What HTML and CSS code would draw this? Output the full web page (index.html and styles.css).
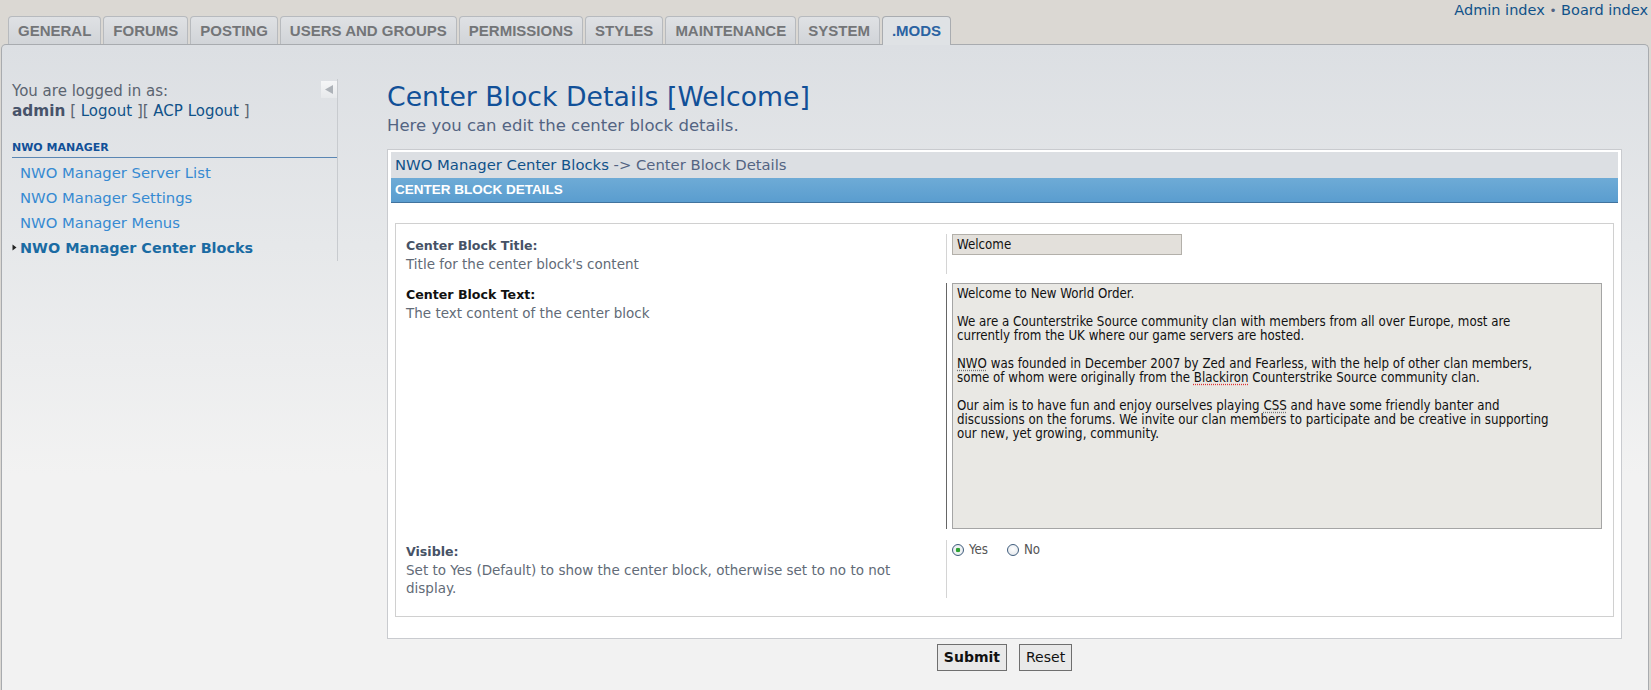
FILE: index.html
```html
<!DOCTYPE html>
<html>
<head>
<meta charset="utf-8">
<title>Center Block Details</title>
<link rel="stylesheet" href="styles.css">
</head>
<body>
<div class="topbar">
  <ul class="tabs">
    <li class="tab">GENERAL</li>
    <li class="tab">FORUMS</li>
    <li class="tab">POSTING</li>
    <li class="tab">USERS AND GROUPS</li>
    <li class="tab">PERMISSIONS</li>
    <li class="tab">STYLES</li>
    <li class="tab">MAINTENANCE</li>
    <li class="tab">SYSTEM</li>
    <li class="tab active">.MODS</li>
  </ul>
  <div class="toplinks"><a href="#">Admin index</a> <span class="dot">•</span> <a href="#">Board index</a></div>
</div>

<div class="panel">
  <aside class="side">
    <div class="login">You are logged in as:<br><b>admin</b> [ <a href="#">Logout</a> ][ <a href="#">ACP Logout</a> ]</div>
    <span class="collapse"><svg width="16" height="17" viewBox="0 0 16 17"><path d="M4 8.5 L12 4 L12 13 Z" fill="#adb2b8"/></svg></span>
    <h3 class="menu-head">NWO MANAGER</h3>
    <ul class="menu">
      <li><a href="#">NWO Manager Server List</a></li>
      <li><a href="#">NWO Manager Settings</a></li>
      <li><a href="#">NWO Manager Menus</a></li>
      <li class="current"><svg class="arrow" width="5" height="7" viewBox="0 0 5 7"><path d="M0.5 0.5 L4.5 3.5 L0.5 6.5 Z" fill="#222"/></svg><a href="#">NWO Manager Center Blocks</a></li>
    </ul>
  </aside>

  <main class="main">
    <h1>Center Block Details [Welcome]</h1>
    <p class="lead">Here you can edit the center block details.</p>

    <form class="form">
      <div class="box">
        <div class="crumb"><a href="#">NWO Manager Center Blocks</a> -&gt; Center Block Details</div>
        <div class="bar">CENTER BLOCK DETAILS</div>
        <fieldset class="fields">
          <dl class="row">
            <dt><label class="lbl">Center Block Title:</label><span class="desc">Title for the center block's content</span></dt>
            <dd><div class="input">Welcome</div></dd>
          </dl>
          <dl class="row focus">
            <dt><label class="lbl">Center Block Text:</label><span class="desc">The text content of the center block</span></dt>
            <dd><div class="textarea">Welcome to New World Order.

We are a Counterstrike Source community clan with members from all over Europe, most are
currently from the UK where our game servers are hosted.

<span class="sp">NWO</span> was founded in December 2007 by Zed and Fearless, with the help of other clan members,
some of whom were originally from the <span class="sp red">Blackiron</span> Counterstrike Source community clan.

Our aim is to have fun and enjoy ourselves playing <span class="sp">CSS</span> and have some friendly banter and
discussions on the forums. We invite our clan members to participate and be creative in supporting
our new, yet growing, community.</div></dd>
          </dl>
          <dl class="row">
            <dt><label class="lbl">Visible:</label><span class="desc">Set to Yes (Default) to show the center block, otherwise set to no to not display.</span></dt>
            <dd class="radios">
              <label class="radio"><input type="radio" name="vis" checked> Yes</label>
              <label class="radio"><input type="radio" name="vis"> No</label>
            </dd>
          </dl>
        </fieldset>
      </div>
      <div class="buttons">
        <button type="button" class="btn primary">Submit</button>
        <button type="button" class="btn">Reset</button>
      </div>
    </form>
  </main>
</div>
</body>
</html>
```

FILE: styles.css
```css
* { box-sizing: border-box; }

html, body {
  margin: 0;
  padding: 0;
}

body {
  background: #dbd8d3;
  font-family: "DejaVu Sans", Verdana, sans-serif;
  color: #536482;
  overflow: hidden;
}

a { color: #105289; text-decoration: none; }

/* ---------- top bar ---------- */
.topbar {
  height: 44px;
  display: flex;
  justify-content: space-between;
  align-items: flex-end;
  padding: 0 3px 0 8px;
}

.tabs {
  list-style: none;
  margin: 0;
  padding: 0;
  display: flex;
  gap: 2px;
  align-items: flex-end;
}

.tab {
  height: 28px;
  line-height: 28px;
  padding: 0 9px;
  font-family: "Liberation Sans", Arial, sans-serif;
  font-weight: bold;
  font-size: 15px;
  color: #737578;
  background: linear-gradient(#dfe1e4, #d1d4d8);
  border: 1px solid #b7babe;
  border-bottom: none;
  border-radius: 4px 4px 0 0;
}

.tab.active {
  height: 29px;
  margin-bottom: -1px;
  color: #2a63a2;
  background: #dfe2e5;
  border-color: #a9acb0;
  position: relative;
  z-index: 2;
}

.toplinks {
  align-self: flex-start;
  margin-top: 2px;
  font-size: 14.5px;
  line-height: 17px;
  color: #105289;
}

.toplinks .dot { color: #536482; font-size: 12px; }

/* ---------- panel ---------- */
.panel {
  margin: 0 2px 0 1px;
  min-height: 660px;
  border: 1px solid #a8abaf;
  border-bottom: none;
  border-radius: 5px 5px 0 0;
  background: linear-gradient(#dcdfe3 0, #e6e8ea 200px, #f2f2f2 430px, #f2f2f2 100%);
  display: flex;
  align-items: flex-start;
  padding-top: 36px;
}

/* ---------- sidebar ---------- */
.side {
  width: 336px;
  flex: none;
  border-right: 1px solid #c8cbcf;
  padding: 2px 0 0 10px;
  position: relative;
  margin-top: -2px;
}

.login {
  font-size: 15px;
  line-height: 20px;
  color: #5b6470;
}

.login b { color: #47536a; font-weight: bold; font-size: 15.3px; }

.collapse {
  position: absolute;
  top: 2px;
  right: 0;
  width: 16px;
  height: 17px;
  background: linear-gradient(#f5f6f7, #e7e9eb);
  display: block;
}
.collapse svg { display: block; }

.menu-head {
  margin: 20px 0 0;
  font-size: 11px;
  line-height: 14px;
  font-weight: bold;
  color: #115098;
  padding-bottom: 2px;
  border-bottom: 1px solid #5a86b3;
}

.menu {
  list-style: none;
  margin: 2px 0 0;
  padding: 0;
}

.menu li {
  line-height: 25px;
  font-size: 14.8px;
  padding-left: 8px;
  position: relative;
}

.menu li a { color: #368ad2; }

.menu li.current a {
  color: #1a6ba3;
  font-weight: bold;
  font-size: 14.4px;
}

.menu .arrow {
  position: absolute;
  left: 0;
  top: 9px;
}

/* ---------- main ---------- */
.main {
  flex: 1;
  padding: 0 26px 0 49px;
}

h1 {
  margin: 0;
  font-size: 26.7px;
  line-height: 32px;
  font-weight: normal;
  color: #115098;
}

.lead {
  margin: 3px 0 0;
  font-size: 16.5px;
  line-height: 20px;
  color: #536482;
}

.form { margin: 13px 0 0; }

.box {
  background: #fff;
  border: 1px solid #c9cbcf;
  padding: 2px 3px 21px;
}

.crumb {
  height: 26px;
  line-height: 26px;
  background: #dcdfe3;
  padding: 0 4px;
  font-size: 14.8px;
  color: #536482;
}

.bar {
  height: 25px;
  line-height: 24px;
  padding: 0 4px;
  font-family: "Liberation Sans", Arial, sans-serif;
  font-size: 13.5px;
  font-weight: bold;
  color: #fff;
  background: linear-gradient(#6eabd6, #5a9dcf);
  border-bottom: 1px solid #41739e;
}

.fields {
  margin: 20px 4px 0;
  padding: 10px 11px 9px 10px;
  border: 1px solid #d0d0d0;
  min-width: 0;
}

.row {
  display: flex;
  margin: 0 0 9px;
}

.row.focus { margin-bottom: 11px; }

.row dt {
  width: 540px;
  flex: none;
  padding: 3px 20px 0 0;
}

.lbl {
  display: block;
  font-size: 12.6px;
  line-height: 18px;
  font-weight: bold;
  color: #465266;
}

.focus .lbl { color: #111; }

.desc {
  display: block;
  font-size: 13.5px;
  line-height: 18.5px;
  color: #626b77;
}

.row dd {
  flex: 1;
  margin: 0;
  border-left: 1px solid #d4d4d4;
  padding-left: 5px;
}

.focus dd { border-left-color: #666; }

.input,
.textarea,
.radio {
  font-family: "DejaVu Sans Condensed", "DejaVu Sans", sans-serif;
  font-stretch: condensed;
  font-size: 13.2px;
  color: #111;
}

.input {
  width: 230px;
  height: 21px;
  line-height: 19px;
  padding: 0 4px;
  background: #e3e0db;
  border: 1px solid #b3b0aa;
}

.textarea {
  height: 246px;
  line-height: 14px;
  padding: 3px 4px;
  background: #e9e8e4;
  border: 1px solid #a5a5a5;
  white-space: pre-line;
}

.sp { text-decoration: underline dotted #777; text-underline-offset: 2px; }
.sp.red { text-decoration-color: #d33; }

.radios {
  display: flex;
  gap: 19px;
  padding-top: 1px;
  align-items: flex-start;
}

.radio {
  display: flex;
  align-items: center;
  gap: 5px;
  line-height: 18px;
  color: #555;
}

.radio input {
  appearance: none;
  -webkit-appearance: none;
  margin: 0;
  width: 12px;
  height: 12px;
  border-radius: 50%;
  border: 1px solid #3f5d7d;
  background: radial-gradient(circle at 50% 40%, #ffffff, #dfe3e8);
}

.radio input:checked {
  background: radial-gradient(circle, #2fa234 0 2px, #f4f6f8 2.6px, #dfe3e8 100%);
}

.buttons {
  display: flex;
  justify-content: center;
  gap: 12px;
  margin-top: 5px;
}

.btn {
  height: 27px;
  padding: 0 6px;
  font-family: "DejaVu Sans", Verdana, sans-serif;
  font-size: 14px;
  color: #111;
  background: #e9e9e9;
  border: 1px solid #6f6f6f;
  border-radius: 0;
}

.btn.primary { font-weight: bold; }
```
